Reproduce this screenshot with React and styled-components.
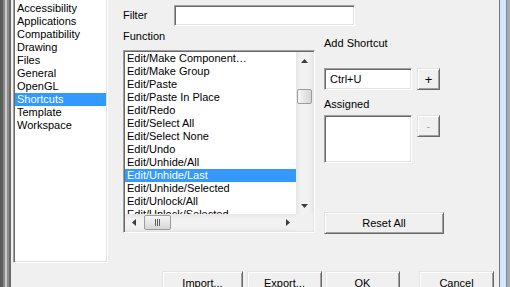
import React from 'react';
import styled, { createGlobalStyle, css } from 'styled-components';

const GlobalStyle = createGlobalStyle`
  html, body {
    margin: 0;
    padding: 0;
    background: #f0f0f0;
  }
  body {
    font-family: "Liberation Sans", Arial, sans-serif;
    font-size: 11px;
    color: #000;
  }
`;

const sunken = css`
  box-sizing: border-box;
  border: 1px solid;
  border-color: #a0a0a0 #ffffff #ffffff #a0a0a0;
  box-shadow: inset 1px 1px 0 #696969, inset -1px -1px 0 #e3e3e3;
  padding: 1px;
  background: #fff;
`;

const raised = css`
  box-sizing: border-box;
  border: 1px solid;
  border-color: #e3e3e3 #696969 #696969 #e3e3e3;
  box-shadow: inset 1px 1px 0 #ffffff, inset -1px -1px 0 #a0a0a0;
  background: #f0f0f0;
  font-family: inherit;
  font-size: 11px;
  color: #000;
  padding: 0;
`;

const Window = styled.div`
  width: 510px;
  height: 287px;
  display: flex;
  overflow: hidden;
  background: #f0f0f0;
`;

const LeftFrame = styled.div`
  flex: 0 0 13px;
  background: linear-gradient(
    to right,
    #5c5c5c 0 3px,
    #8a8a8a 3px 5px,
    #c9c9c9 5px 7px,
    #8e8e8e 7px 9px,
    #6a6a6a 9px 11px,
    #f0f0f0 11px 13px
  );
`;

const RightFrame = styled.div`
  flex: 0 0 11px;
  background: linear-gradient(
    to right,
    #6d7480 0 1px,
    #d4e6fb 1px 7px,
    #7f8a96 7px 8px,
    #a9a9a9 8px 11px
  );
`;

const Sidebar = styled.div`
  ${sunken};
  flex: 0 0 95px;
  height: 267px;
  margin-top: -4px;
  padding-top: 5px;
`;

const Item = styled.div`
  height: 13px;
  line-height: 13px;
  padding-left: ${p => p.$pad || 2}px;
  white-space: nowrap;
  background: ${p => (p.$selected ? '#3399ff' : 'transparent')};
  color: ${p => (p.$selected ? '#fff' : '#000')};
`;

const Main = styled.div`
  flex: 1;
  display: flex;
  flex-direction: column;
  padding: 5px 0 0 15px;
`;

const FilterRow = styled.div`
  display: flex;
  align-items: center;
  height: 21px;
`;

const Label = styled.div`
  width: ${p => p.$width || 'auto'};
  line-height: 13px;
  height: 13px;
  margin-bottom: ${p => p.$gap || 0}px;
`;

const Field = styled.div`
  ${sunken};
  width: ${p => p.$w}px;
  height: ${p => p.$h}px;
  line-height: ${p => p.$h - 4}px;
  padding-left: 5px;
`;

const Body = styled.div`
  display: flex;
  align-items: flex-start;
`;

const FunctionCol = styled.div`
  display: flex;
  flex-direction: column;
  margin-top: 4px;
`;

const FunctionList = styled.div`
  ${sunken};
  width: 192px;
  height: 183px;
  display: grid;
  grid-template-columns: 1fr 17px;
  grid-template-rows: 1fr 17px;
`;

const Rows = styled.div`
  overflow: hidden;
`;

const VScroll = styled.div`
  display: flex;
  flex-direction: column;
  background: linear-gradient(to right, #e6e6e6, #f2f2f2 30%, #f2f2f2 70%, #e9e9e9);
`;

const HScroll = styled.div`
  display: flex;
  align-items: center;
  background: linear-gradient(to bottom, #e6e6e6, #f2f2f2 30%, #f2f2f2 70%, #e9e9e9);
`;

const Corner = styled.div`
  background: #f0f0f0;
`;

const ArrowBox = styled.div`
  flex: 0 0 17px;
  height: 17px;
  width: 17px;
  display: flex;
  align-items: center;
  justify-content: center;
`;

const Track = styled.div`
  flex: 1;
  display: flex;
  flex-direction: ${p => (p.$vertical ? 'column' : 'row')};
  align-items: center;
`;

const Thumb = styled.div`
  box-sizing: border-box;
  border: 1px solid #9c9c9c;
  border-radius: 2px;
  background: ${p =>
    p.$vertical
      ? 'linear-gradient(to right, #f6f6f6, #e6e6e6 50%, #d6d6d6)'
      : 'linear-gradient(to bottom, #f6f6f6, #e6e6e6 50%, #d6d6d6)'};
  width: ${p => (p.$vertical ? '15px' : '27px')};
  height: ${p => (p.$vertical ? '15px' : '15px')};
  margin: ${p => (p.$vertical ? '20px 0 0 0' : '0 0 0 2px')};
  display: flex;
  align-items: center;
  justify-content: center;
`;

const RightCol = styled.div`
  display: flex;
  flex-direction: column;
  margin: 11px 0 0 9px;
  width: 121px;
`;

const FieldRow = styled.div`
  display: flex;
  align-items: flex-start;
  gap: 5px;
`;

const SmallButton = styled.button`
  ${raised};
  width: 23px;
  height: 22px;
  font-size: ${p => (p.disabled ? '10px' : '13px')};
  color: ${p => (p.disabled ? '#a0a0a0' : '#000')};
`;

const Button = styled.button`
  ${raised};
  width: ${p => p.$w}px;
  height: ${p => p.$h || 23}px;
  margin-left: ${p => p.$ml || 0}px;
  margin-top: ${p => p.$mt || 0}px;
  flex: 0 0 auto;
`;

const ButtonRow = styled.div`
  display: flex;
  margin-top: 37px;
  padding-left: 39px;
`;

const Arrow = ({ dir }) => {
  const pts = {
    up: '0,4 7,4 3.5,0',
    down: '0,0 7,0 3.5,4',
    left: '4,0 4,7 0,3.5',
    right: '0,0 0,7 4,3.5'
  }[dir];
  const vert = dir === 'up' || dir === 'down';
  return (
    <svg width={vert ? 7 : 4} height={vert ? 4 : 7}>
      <polygon points={pts} fill="#3c3c3c" />
    </svg>
  );
};

const Grip = ({ vertical }) => (
  <svg width={vertical ? 7 : 7} height={vertical ? 7 : 7}>
    {[0, 2, 4].map(o =>
      vertical ? (
        <rect key={o} x={0} y={o + 1} width={7} height={1} fill="#5f5f5f" />
      ) : (
        <rect key={o} x={o + 1} y={0} width={1} height={7} fill="#5f5f5f" />
      )
    )}
  </svg>
);

const sections = [
  'Accessibility',
  'Applications',
  'Compatibility',
  'Drawing',
  'Files',
  'General',
  'OpenGL',
  'Shortcuts',
  'Template',
  'Workspace'
];

const functions = [
  'Edit/Make Component…',
  'Edit/Make Group',
  'Edit/Paste',
  'Edit/Paste In Place',
  'Edit/Redo',
  'Edit/Select All',
  'Edit/Select None',
  'Edit/Undo',
  'Edit/Unhide/All',
  'Edit/Unhide/Last',
  'Edit/Unhide/Selected',
  'Edit/Unlock/All',
  'Edit/Unlock/Selected'
];

export default function App() {
  return (
    <>
      <GlobalStyle />
      <Window>
        <LeftFrame />
        <Sidebar>
          {sections.map(s => (
            <Item key={s} $selected={s === 'Shortcuts'}>
              {s}
            </Item>
          ))}
        </Sidebar>
        <Main>
          <FilterRow>
            <Label $width="51px">Filter</Label>
            <Field $w={181} $h={21} />
          </FilterRow>
          <Body>
            <FunctionCol>
              <Label $gap={7}>Function</Label>
              <FunctionList>
                <Rows>
                  {functions.map(f => (
                    <Item key={f} $selected={f === 'Edit/Unhide/Last'}>
                      {f}
                    </Item>
                  ))}
                </Rows>
                <VScroll>
                  <ArrowBox>
                    <Arrow dir="up" />
                  </ArrowBox>
                  <Track $vertical>
                    <Thumb $vertical />
                  </Track>
                  <ArrowBox>
                    <Arrow dir="down" />
                  </ArrowBox>
                </VScroll>
                <HScroll>
                  <ArrowBox>
                    <Arrow dir="left" />
                  </ArrowBox>
                  <Track>
                    <Thumb>
                      <Grip />
                    </Thumb>
                  </Track>
                  <ArrowBox>
                    <Arrow dir="right" />
                  </ArrowBox>
                </HScroll>
                <Corner />
              </FunctionList>
            </FunctionCol>
            <RightCol>
              <Label $gap={18}>Add Shortcut</Label>
              <FieldRow>
                <Field $w={88} $h={22}>Ctrl+U</Field>
                <SmallButton>+</SmallButton>
              </FieldRow>
              <Label style={{ marginTop: 8 }} $gap={4}>
                Assigned
              </Label>
              <FieldRow>
                <Field $w={88} $h={48} />
                <SmallButton disabled>-</SmallButton>
              </FieldRow>
              <Button $w={120} $h={22} $mt={49}>
                Reset All
              </Button>
            </RightCol>
          </Body>
          <ButtonRow>
            <Button $w={81}>Import...</Button>
            <Button $w={75} $ml={4}>
              Export...
            </Button>
            <Button $w={75} $ml={3}>
              OK
            </Button>
            <Button $w={75} $ml={19}>
              Cancel
            </Button>
          </ButtonRow>
        </Main>
        <RightFrame />
      </Window>
    </>
  );
}
